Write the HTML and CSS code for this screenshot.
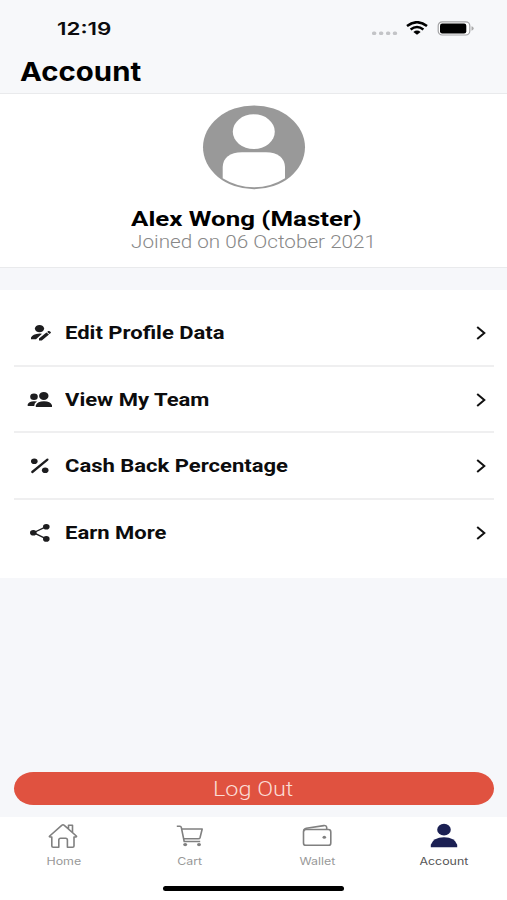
FILE: index.html
```html
<!DOCTYPE html>
<html lang="en">
<head>
<meta charset="utf-8">
<title>Account</title>
<link rel="stylesheet" href="styles.css">
</head>
<body>
<div class="screen">
  <header class="header">
    <div class="status">
      <span class="time wide">12:19</span>
      <div class="status-icons">
        <svg width="27" height="5" viewBox="0 0 27 5" fill="#c3c4c7"><rect x="1" y="0.5" width="4.3" height="3.6" rx="1.6"/><rect x="8" y="0.5" width="4.3" height="3.6" rx="1.6"/><rect x="15" y="0.5" width="4.3" height="3.6" rx="1.6"/><rect x="21.8" y="0.5" width="4.3" height="3.6" rx="1.6"/></svg>
        <svg class="wifi" width="22" height="14" viewBox="0 0 22 14" fill="none" stroke="#000" stroke-width="2.5"><path d="M1 5Q11-2.6 21 5M4.6 8.6Q11 3.5 17.4 8.6"/><path d="M7.4 11Q11 8.2 14.6 11L11 13.8z" fill="#000" stroke="none"/></svg>
        <svg class="battery" width="37" height="15" viewBox="0 0 37 15"><rect x="1.2" y=".8" width="31.6" height="13.2" rx="4" fill="#fff" stroke="#a3a3a5" stroke-width="1.2"/><rect x="3" y="2.5" width="26.3" height="10" rx="2.2"/><path d="M34.5 5.3q2.2.6 2.2 2.2T34.5 9.7z" fill="#aaa"/></svg>
      </div>
    </div>
    <h1 class="title"><span class="wide">Account</span></h1>
  </header>

  <section class="profile">
    <svg class="avatar" width="104" height="85" viewBox="0 0 104 85"><ellipse cx="52" cy="42.3" rx="51" ry="41.9" fill="#999"/><ellipse cx="51.8" cy="26.7" rx="21" ry="17.4" fill="#fff"/><path d="M20.7 73.3V62Q21.5 47.7 40 47.3H64Q82 47.7 83 62V73.3Q69 82.3 52 82.3T20.7 73.3z" fill="#fff"/></svg>
    <div class="identity">
      <div class="name"><span class="wide">Alex Wong (Master)</span></div>
      <div class="joined"><span class="wide">Joined on 06 October 2021</span></div>
    </div>
  </section>

  <nav class="menu">
    <a class="row">
      <svg class="icon" width="26" height="20" viewBox="0 0 26 20" fill="#1d1d1f"><ellipse cx="12.5" cy="5.6" rx="4.6" ry="3.7"/><path d="M4 16.2V14.6Q5.5 11 12.7 10.6L15 10.8 9 16.2zM12 17.4V15.4L19.4 9.6 22 11.4 14.8 17.4zM20.2 8.9L21.2 8.1Q22 7.7 22.8 8.3L23.7 9Q24.2 9.6 23.7 10.1L22.6 10.9z"/></svg>
      <span class="label"><span class="wide">Edit Profile Data</span></span>
      <svg class="chevron" width="10" height="14" viewBox="0 0 10 14"><path d="M1.2 1L8.3 7 1.2 13"/></svg>
    </a>
    <a class="row">
      <svg class="icon" width="26" height="20" viewBox="0 0 26 20" fill="#1d1d1f"><ellipse cx="7" cy="6.8" rx="3.8" ry="3.2"/><ellipse cx="16.8" cy="5.9" rx="4.7" ry="4"/><path d="M8.8 17V15.3Q10.5 11.2 17 11.2T25 15.3V17zM.7 16V14.3Q2.2 11.2 7 11.2 8.7 11.2 10 11.6 7.2 13 7.2 16z"/></svg>
      <span class="label"><span class="wide">View My Team</span></span>
      <svg class="chevron" width="10" height="14" viewBox="0 0 10 14"><path d="M1.2 1L8.3 7 1.2 13"/></svg>
    </a>
    <a class="row">
      <svg class="icon" width="26" height="20" viewBox="0 0 26 20" fill="#1d1d1f"><ellipse cx="7.3" cy="5.2" rx="3.3" ry="2.8"/><ellipse cx="18.2" cy="14.2" rx="3.3" ry="2.8"/><path d="M5.3 16L20.4 3.6" stroke="#1d1d1f" stroke-width="2.3" stroke-linecap="round"/></svg>
      <span class="label"><span class="wide">Cash Back Percentage</span></span>
      <svg class="chevron" width="10" height="14" viewBox="0 0 10 14"><path d="M1.2 1L8.3 7 1.2 13"/></svg>
    </a>
    <a class="row">
      <svg class="icon" width="26" height="20" viewBox="0 0 26 20" fill="#1d1d1f"><path d="M19.3 3.7L6.5 9.7 19.3 15.9" fill="none" stroke="#1d1d1f" stroke-width="1.3"/><ellipse cx="19.3" cy="3.8" rx="3.3" ry="2.8"/><ellipse cx="6.3" cy="9.8" rx="3.3" ry="2.8"/><ellipse cx="19.3" cy="15.9" rx="3.3" ry="2.8"/></svg>
      <span class="label"><span class="wide">Earn More</span></span>
      <svg class="chevron" width="10" height="14" viewBox="0 0 10 14"><path d="M1.2 1L8.3 7 1.2 13"/></svg>
    </a>
  </nav>

  <div class="actions">
    <button class="logout"><span class="wide">Log Out</span></button>
  </div>

  <footer class="tabbar">
    <div class="tabs">
      <a class="tab"><svg width="32" height="26" viewBox="0 0 32 26" fill="none" stroke="#808080" stroke-width="1.6" stroke-linejoin="round"><path d="M2.7 13L14.7 2.3Q16 1.3 17.3 2.3L29.3 13Q30 14 28.8 14H27V23Q27 24.2 25.6 24.2H20.4V17Q20.4 15.2 18.6 15.2H13.6Q11.8 15.2 11.8 17V24.2H6.2Q4.8 24.2 4.8 23V14H3.2Q1.8 14 2.7 13zM21.5 5.6V2.2H25.5V9.2"/></svg><span class="wide">Home</span></a>
      <a class="tab cart"><svg width="32" height="26" viewBox="0 0 32 26" fill="none" stroke="#808080" stroke-width="1.6" stroke-linejoin="round"><path d="M2.8 3.2H6Q7 3.2 7.3 4.4L10.2 18.5H26.2M7.8 6H28.2L26 14.8Q25.7 15.8 24.4 15.8H9.7"/><ellipse cx="11.2" cy="21.6" rx="2" ry="1.7" fill="#808080" stroke="none"/><ellipse cx="25" cy="21.6" rx="2" ry="1.7" fill="#808080" stroke="none"/></svg><span class="wide">Cart</span></a>
      <a class="tab wallet"><svg width="32" height="26" viewBox="0 0 32 26" fill="none" stroke="#808080" stroke-width="1.6" stroke-linejoin="round"><rect x="2.5" y="6.5" width="27.3" height="15.8" rx="2.4"/><path d="M2.6 8.3Q2.8 5.8 5.3 5.3L22.8 2.6Q25.5 2.3 25.7 4.5V6.4"/><ellipse cx="23.3" cy="14.2" rx="1.8" ry="1.5" fill="#808080" stroke="none"/></svg><span class="wide">Wallet</span></a>
      <a class="tab account"><svg width="32" height="26" viewBox="0 0 32 26" fill="#1b2053"><ellipse cx="16" cy="6.7" rx="6.8" ry="5.9"/><path d="M2.8 24.3V21.8Q5 14.3 16 14.3T29.2 21.8V24.3z"/></svg><span class="wide">Account</span></a>
    </div>
    <div class="home-indicator"></div>
  </footer>
</div>
</body>
</html>
```

FILE: styles.css
```css
* { box-sizing: border-box; }

body {
  margin: 0;
  font-family: Roboto, sans-serif;
  color: #0c0c0d;
  background: #f6f7fa;
}

.screen {
  width: 507px;
  height: 900px;
  display: flex;
  flex-direction: column;
  overflow: hidden;
}

svg { display: block; flex: none; }

.wide {
  display: inline-block;
  white-space: nowrap;
  transform: scaleX(1.223);
  transform-origin: left center;
}

.header {
  height: 94px;
  border-bottom: 1px solid #e9eaec;
  background: #f7f8fa;
  font-family: Inter, sans-serif;
}

.status {
  height: 56px;
  padding: 0 33px 0 57px;
  display: flex;
  align-items: center;
  justify-content: space-between;
}

.time {
  margin-top: 1px;
  font-size: 17.5px;
  font-weight: 600;
  line-height: 20px;
  transform: scaleX(1.28);
}

.status-icons { display: flex; align-items: center; }
.status-icons svg:first-child { margin-top: 10px; }
.wifi { margin-left: 8px; }
.battery { margin-left: 9px; }

.title {
  margin: 0;
  padding-left: 20px;
  font-size: 26px;
  line-height: 32px;
  font-weight: 700;
  color: #000;
}
.title .wide { transform: scaleX(1.13); }

.profile {
  height: 174px;
  padding-top: 11px;
  background: #fff;
  border-bottom: 1px solid #e9eaec;
}

.avatar { margin: 0 auto; }
.identity { padding: 17px 0 0 131px; }
.name { font-size: 20.5px; line-height: 24px; font-weight: 700; color: #000; }
.name .wide { transform: scaleX(1.262); }
.joined { font-size: 17.5px; line-height: 22px; font-weight: 300; color: #888; }
.joined .wide { transform: scaleX(1.182); }

.menu {
  height: 288px;
  margin-top: 22px;
  padding: 10px 13px 12px 14px;
  background: #fff;
}

.row {
  height: 66.5px;
  padding: 2px 8px 0 13px;
  display: flex;
  align-items: center;
  border-bottom: 2px solid #efeff0;
}
.row:last-child { border-bottom-color: transparent; }

.label { margin-left: 12px; flex: 1; font-size: 18px; font-weight: 700; line-height: 22px; }
.chevron { fill: none; stroke: #111; stroke-width: 2; }

.actions { padding: 194px 13px 0 14px; }

.logout {
  width: 100%;
  height: 33px;
  padding: 0 0 0 199px;
  display: flex;
  align-items: center;
  border: 0;
  border-radius: 20px / 17px;
  background: #e05240;
  color: #fbdcd5;
  font: 300 20px/24px Roboto, sans-serif;
}
.logout .wide { transform: scaleX(1.17); }

.tabbar {
  height: 83px;
  margin-top: 12px;
  background: #fff;
  font-family: Inter, sans-serif;
}

.tabs { display: grid; grid-template-columns: repeat(4, 1fr); height: 69px; }

.tab {
  padding-top: 6px;
  display: flex;
  flex-direction: column;
  align-items: center;
  font-size: 10.6px;
  line-height: 14px;
  color: #999;
}
.tab .wide { margin-top: 6px; transform: scaleX(1.17); transform-origin: center; }
.tab.account { color: #555; }

.home-indicator {
  width: 181px;
  height: 5px;
  margin: 0 auto;
  border-radius: 3px;
  background: #000;
}
```
